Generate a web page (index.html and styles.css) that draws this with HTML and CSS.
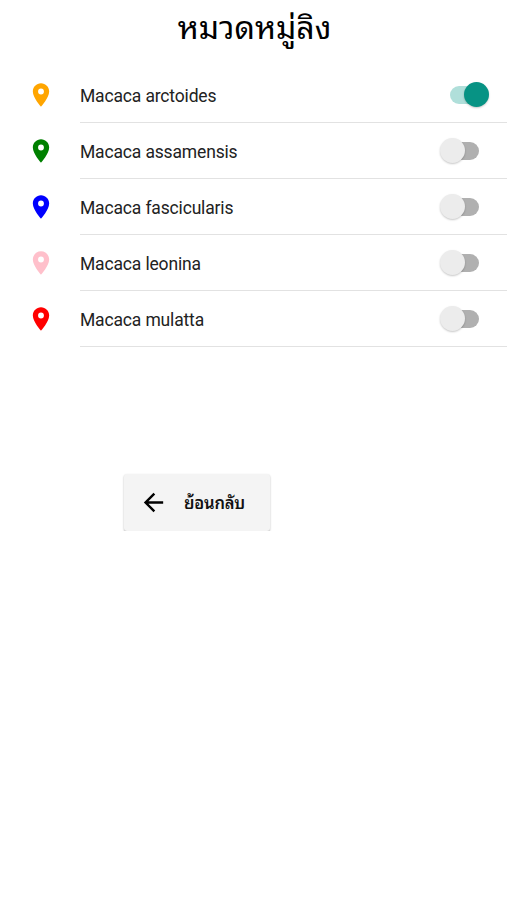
FILE: index.html
```html
<!DOCTYPE html>
<html lang="th">
<head>
<meta charset="utf-8">
<title>หมวดหมู่ลิง</title>
<link rel="stylesheet" href="styles.css">
</head>
<body>
<svg class="defs"><symbol id="pin" viewBox="0 0 24 24"><path fill-rule="evenodd" d="M12 2C8.13 2 5 5.13 5 9c0 5.25 7 13 7 13s7-7.75 7-13c0-3.87-3.13-7-7-7zm0 9.5a2.5 2.5 0 1 1 0-5 2.5 2.5 0 0 1 0 5z"/></symbol></svg>
<h1 class="title">หมวดหมู่ลิง</h1>
<ul class="list">
<li class="row orange"><svg class="pin"><use href="#pin"/></svg><div class="item"><span class="name">Macaca arctoides</span><span class="switch on"></span></div></li>
<li class="row green"><svg class="pin"><use href="#pin"/></svg><div class="item"><span class="name">Macaca assamensis</span><span class="switch"></span></div></li>
<li class="row blue"><svg class="pin"><use href="#pin"/></svg><div class="item"><span class="name">Macaca fascicularis</span><span class="switch"></span></div></li>
<li class="row pink"><svg class="pin"><use href="#pin"/></svg><div class="item"><span class="name">Macaca leonina</span><span class="switch"></span></div></li>
<li class="row red"><svg class="pin"><use href="#pin"/></svg><div class="item"><span class="name">Macaca mulatta</span><span class="switch"></span></div></li>
</ul>
<button class="back"><svg class="arrow" viewBox="0 0 24 24"><path d="M20 11H7.83l5.59-5.59L12 4l-8 8 8 8 1.41-1.41L7.83 13H20v-2z"/></svg><span class="label">ย้อนกลับ</span></button>
</body>
</html>
```

FILE: styles.css
```css
* { box-sizing: border-box; }
body { margin: 0; background: #fff; color: #222; font-family: Roboto, "Noto Sans Thai Looped", "Noto Looped Thai", Loma, Waree, Garuda, Umpush, Tahoma, sans-serif; }
.defs { display: none; }
.title { margin: 0; height: 67px; padding: 7px 0 0 2px; font-size: 32px; line-height: 42px; font-weight: 400; color: #000; text-align: center; }
.list { margin: 0; padding: 0; list-style: none; }
.row { display: flex; height: 56px; align-items: center; padding-left: 27px; }
.pin { width: 28px; height: 28px; margin-right: 25px; fill: currentColor; }
.item { flex: 1; height: 56px; display: flex; align-items: center; justify-content: space-between; padding: 1px 28px 0 0; border-bottom: 1px solid #e2e2e2; }
.name { padding-top: 1px; color: #222; font-size: 17.5px; letter-spacing: -.16px; }
.orange { color: #ffa500; }
.green { color: #008000; }
.blue { color: #00f; }
.pink { color: #ffc0cb; }
.red { color: #f00; }
.switch { position: relative; width: 37px; height: 18px; border-radius: 9px; background: #b0b0b0; }
.switch::after { content: ""; position: absolute; left: -2px; top: -4px; width: 25px; height: 25px; border-radius: 50%; background: #ececec; box-shadow: 0 1px 2px rgba(0,0,0,.22); }
.switch.on { margin-right: -8px; background: #b0dfda; }
.switch.on::after { left: 14px; background: #079384; }
.back { display: flex; align-items: center; width: 146px; height: 57px; margin: 127px 0 0 124px; padding: 0 0 0 15px; border: 0; border-radius: 3px; background: #f4f4f4; box-shadow: 0 1px 2px rgba(0,0,0,.3); font-family: inherit; }
.arrow { width: 29px; height: 29px; margin-right: 16px; }
.label { padding-bottom: 2px; font-size: 16.5px; font-weight: 600; letter-spacing: -.2px; color: #111; }
```
